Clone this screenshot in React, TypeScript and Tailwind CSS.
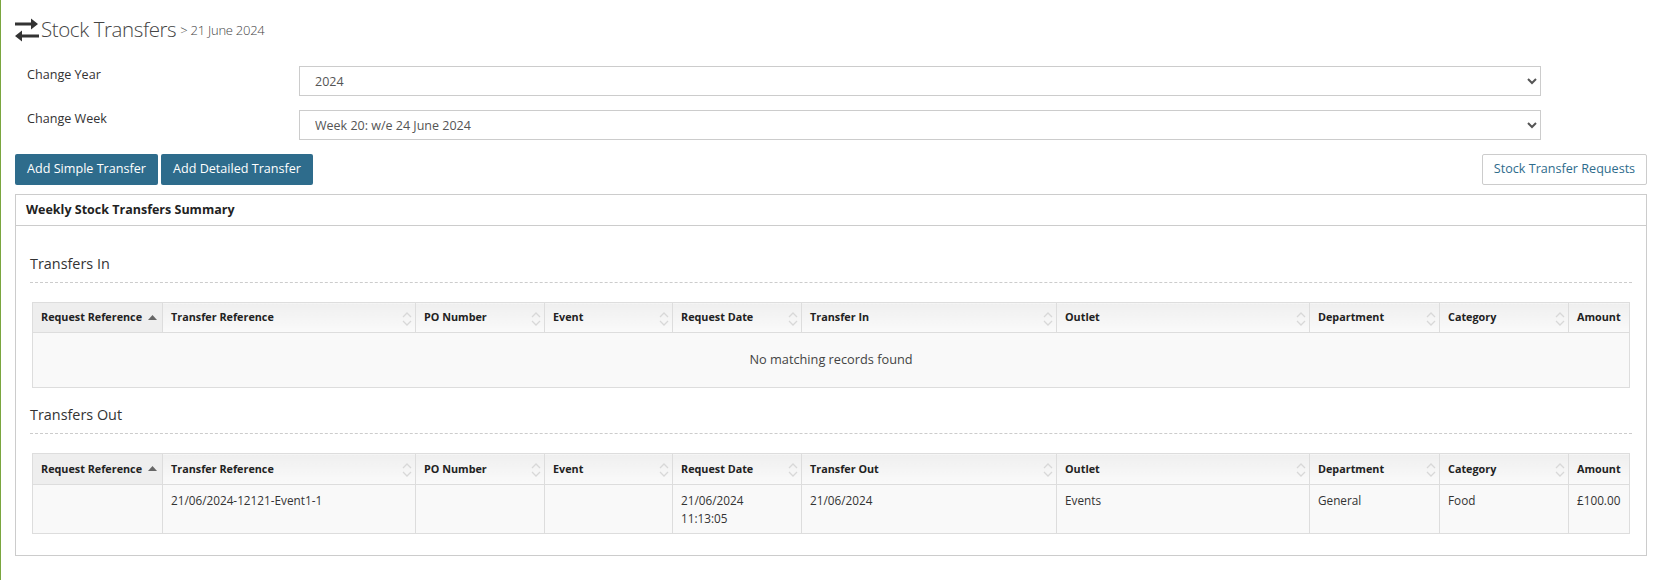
type Col = { label: string; width: number; sort?: boolean };

function columns(transferLabel: string): Col[] {
  return [
    { label: "Request Reference", width: 130 },
    { label: "Transfer Reference", width: 253, sort: true },
    { label: "PO Number", width: 129, sort: true },
    { label: "Event", width: 128, sort: true },
    { label: "Request Date", width: 129, sort: true },
    { label: transferLabel, width: 255, sort: true },
    { label: "Outlet", width: 253, sort: true },
    { label: "Department", width: 130, sort: true },
    { label: "Category", width: 129, sort: true },
    { label: "Amount", width: 61 },
  ];
}

function TransferIcon() {
  return (
    <svg width="24" height="24" viewBox="0 0 24 24" fill="#333" className="shrink-0">
      <path d="M0 4.5h16V0.5L23 6l-7 5.5V7.5H0z" />
      <path d="M24 16.500H7v-4L0 18l7 5.500v-4h17z" />
    </svg>
  );
}

function SortBoth() {
  return (
    <svg
      width="10"
      height="16"
      viewBox="0 0 10 16"
      fill="none"
      stroke="#d8d8d8"
      strokeWidth="1.3"
      className="absolute right-[3px] top-[8px]"
    >
      <path d="M1 6l4-4 4 4" />
      <path d="M1 10l4 4 4-4" />
    </svg>
  );
}

function SortAsc() {
  return (
    <svg width="9" height="5" viewBox="0 0 9 5" className="absolute right-[5px] top-[12px]">
      <path d="M0 5l4.500-5L9 5z" fill="#666" />
    </svg>
  );
}

function TableHead({ cols, rowClass }: { cols: Col[]; rowClass: string }) {
  return (
    <thead>
      <tr className={rowClass}>
        {cols.map((c, i) => (
          <th
            key={c.label}
            className={
              "relative border border-[#ddd] px-[8px] text-left text-[10.8px] font-bold text-[#222] " +
              (i === 0 ? "bg-[#eeeeee]" : "bg-gradient-to-b from-[#efefef] to-[#fafafa]")
            }
          >
            {c.label}
            {i === 0 && <SortAsc />}
            {c.sort && <SortBoth />}
          </th>
        ))}
      </tr>
    </thead>
  );
}

function Colgroup({ cols }: { cols: Col[] }) {
  return (
    <colgroup>
      {cols.map((c) => (
        <col key={c.label} style={{ width: c.width }} />
      ))}
    </colgroup>
  );
}

function SectionTitle({ children }: { children: React.ReactNode }) {
  return (
    <div className="mx-[14px] border-b border-dashed border-[#ccc] pb-[8px] text-[14.400px] leading-[20px] text-[#333]">
      {children}
    </div>
  );
}

const cell = "border border-[#ddd] px-[8px] pt-[6px] align-top text-[11.750px] leading-[18px] text-[#333]";

export default function App() {
  const inCols = columns("Transfer In");
  const outCols = columns("Transfer Out");

  return (
    <div
      className="h-[580px] overflow-hidden border-l border-[#7aa63f] bg-white pl-[14px] pr-[9px] text-[12.6px] text-[#333]"
      style={{ fontFamily: '"Open Sans", sans-serif' }}
    >
      <h1 className="flex h-[58px] items-center gap-[2px] pt-[1px]">
        <TransferIcon />
        <span className="text-[20.500px] font-light tracking-[-0.4px] text-[#444]">Stock Transfers</span>
        <span className="ml-[2px] mt-[3px] text-[13px] font-light tracking-[-0.25px] text-[#444]">&gt; 21 June 2024</span>
      </h1>

      <div className="mt-[8px] grid grid-cols-[272px_1242px] gap-y-[14px] pl-[12px]">
        <label className="leading-[17px]">Change Year</label>
        <select className="h-[30px] border border-[#ccc] bg-white pl-[11px] text-[12.500px] text-[#555]">
          <option>2024</option>
        </select>
        <label className="leading-[17px]">Change Week</label>
        <select className="h-[30px] border border-[#ccc] bg-white pl-[11px] text-[12.500px] text-[#555]">
          <option>Week 20: w/e 24 June 2024</option>
        </select>
      </div>

      <div className="mt-[14px] flex gap-[3px]">
        <button className="h-[31px] w-[143px] rounded-[2px] bg-[#2e6c8c] text-white">Add Simple Transfer</button>
        <button className="h-[31px] w-[152px] rounded-[2px] bg-[#2e6c8c] text-white">Add Detailed Transfer</button>
        <button className="ml-auto h-[31px] w-[165px] rounded-[2px] border border-[#ccc] bg-white text-[#2e6c8c]">
          Stock Transfer Requests
        </button>
      </div>

      <div className="mt-[9px] h-[362px] border border-[#ccc]">
        <div className="h-[31px] border-b border-[#ccc] pl-[10px] text-[12.500px] font-bold leading-[29px] text-[#222]">
          Weekly Stock Transfers Summary
        </div>

        <div className="pt-[28px]">
          <SectionTitle>Transfers In</SectionTitle>
          <div className="ml-[16px] mt-[19px] w-[1597px]">
            <table className="w-full table-fixed border-collapse bg-[#f9f9f9]">
              <Colgroup cols={inCols} />
              <TableHead cols={inCols} rowClass="h-[30px]" />
              <tbody>
                <tr>
                  <td colSpan={10} className="h-[55px] border border-[#ddd] text-center text-[12.750px] text-[#444]">
                    No matching records found
                  </td>
                </tr>
              </tbody>
            </table>
          </div>
        </div>

        <div className="pt-[17px]">
          <SectionTitle>Transfers Out</SectionTitle>
          <div className="ml-[16px] mt-[19px] w-[1597px]">
            <table className="w-full table-fixed border-collapse bg-[#f9f9f9]">
              <Colgroup cols={outCols} />
              <TableHead cols={outCols} rowClass="h-[31px]" />
              <tbody>
                <tr className="h-[49px]">
                  <td className={cell}></td>
                  <td className={cell}>21/06/2024-12121-Event1-1</td>
                  <td className={cell}></td>
                  <td className={cell}></td>
                  <td className={cell}>
                    21/06/2024
                    <br />
                    11:13:05
                  </td>
                  <td className={cell}>21/06/2024</td>
                  <td className={cell}>Events</td>
                  <td className={cell}>General</td>
                  <td className={cell}>Food</td>
                  <td className={cell}>£100.00</td>
                </tr>
              </tbody>
            </table>
          </div>
        </div>
      </div>
    </div>
  );
}
